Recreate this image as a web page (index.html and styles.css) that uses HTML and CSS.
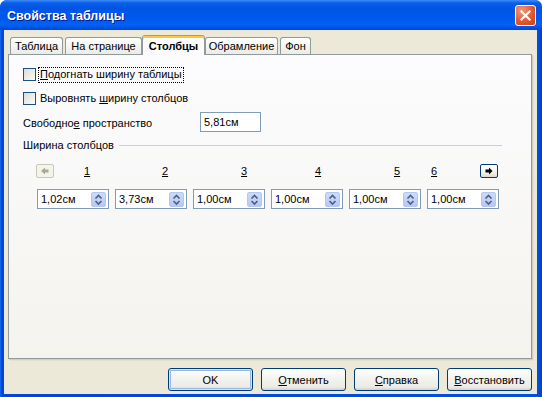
FILE: index.html
```html
<!DOCTYPE html>
<html lang="ru">
<head>
  <meta charset="UTF-8" />
  <title>Свойства таблицы</title>
  <link rel="stylesheet" href="styles.css">
</head>
<body>

  <div class="window">
    <div class="titlebar">
      <span class="title">Свойства таблицы</span>
      <button class="close-btn">
        <svg width="21" height="21" viewBox="0 0 21 21"><path d="M6 6 L15 15 M15 6 L6 15" stroke="#fff" stroke-width="2.4" stroke-linecap="square"/></svg>
      </button>
    </div>

    <div class="client">
      <div class="tabs">
        <div class="tab">Таблица</div>
        <div class="tab">На странице</div>
        <div class="tab active">Столбцы</div>
        <div class="tab">Обрамление</div>
        <div class="tab">Фон</div>
      </div>

      <div class="panel">
        <div class="check-row">
          <span class="checkbox"></span>
          <span class="check-label focused"><u>П</u>одогнать ширину таблицы</span>
        </div>
        <div class="check-row second">
          <span class="checkbox"></span>
          <span class="check-label">Выровнять <u>ш</u>ирину столбцов</span>
        </div>

        <div class="space-row">
          <span class="field-label">Свободно<u>е</u> пространство</span>
          <div class="textbox">5,81см</div>
        </div>

        <div class="group-title">
          <span>Ширина столбцов</span>
          <span class="rule"></span>
        </div>

        <div class="col-labels">
          <button class="arrow-btn disabled">
            <svg width="18" height="14" viewBox="0 0 18 14"><path d="M5 7 L9 3.5 L9 5.5 L12.5 5.5 L12.5 8.5 L9 8.5 L9 10.5 Z" fill="#aca899"/></svg>
          </button>
          <u>1</u>
          <u>2</u>
          <u>3</u>
          <u>4</u>
          <u>5</u>
          <u>6</u>
          <button class="arrow-btn">
            <svg width="18" height="14" viewBox="0 0 18 14"><path d="M12.5 7 L9 3.5 L9 5.5 L5.5 5.5 L5.5 8.5 L9 8.5 L9 10.5 Z" fill="#000"/></svg>
          </button>
        </div>

        <div class="spin-row">
          <div class="spinfield"><span>1,02см</span><span class="spin"></span></div>
          <div class="spinfield"><span>3,73см</span><span class="spin"></span></div>
          <div class="spinfield"><span>1,00см</span><span class="spin"></span></div>
          <div class="spinfield"><span>1,00см</span><span class="spin"></span></div>
          <div class="spinfield"><span>1,00см</span><span class="spin"></span></div>
          <div class="spinfield"><span>1,00см</span><span class="spin"></span></div>
        </div>
      </div>

      <div class="buttons">
        <button class="btn default">OK</button>
        <button class="btn"><u>О</u>тменить</button>
        <button class="btn"><u>С</u>правка</button>
        <button class="btn"><u>В</u>осстановить</button>
      </div>
    </div>
  </div>

</body>
</html>
```

FILE: styles.css
```css
* { box-sizing: border-box; }

body {
  margin: 0;
  background: #fff;
  font-family: "Liberation Sans", Arial, sans-serif;
  font-size: 11px;
  color: #000;
}

button {
  font-family: inherit;
  font-size: 11px;
  color: #000;
  padding: 0;
}

.window {
  width: 542px;
  height: 397px;
  display: flex;
  flex-direction: column;
  background: linear-gradient(90deg, #166aee, #0046d6 2px, #0050e0 538px, #0040c8);
  border-radius: 7px 7px 0 0;
  overflow: hidden;
}

.titlebar {
  height: 30px;
  display: flex;
  align-items: center;
  padding: 0 6px 0 7px;
  background: linear-gradient(#3c8cf8 0, #0a5ee8 3px, #0055e5 8px, #0058ee 18px, #0062f6 25px, #0050e0 28px, #0046d6 30px);
}

.title {
  color: #fff;
  font-weight: bold;
  font-size: 12.5px;
  text-shadow: 1px 1px 0 #0a1883;
  margin-top: 1px;
}

.close-btn {
  margin-left: auto;
  width: 21px;
  height: 21px;
  border: 1px solid #fff;
  border-radius: 3px;
  background: radial-gradient(circle at 30% 25%, #f09a7c, #e2582f 55%, #c8401a);
  display: flex;
  align-items: center;
  justify-content: center;
}

.close-btn svg {
  display: block;
}

.client {
  flex: 1;
  margin: 0 5px 3px 4px;
  background: #ece9d8;
  padding: 5px 5px 0 4px;
  display: flex;
  flex-direction: column;
}

.tabs {
  display: flex;
  align-items: flex-end;
  height: 19px;
  margin-left: 2px;
  position: relative;
  z-index: 1;
}

.tab {
  height: 17px;
  margin-right: 2px;
  border: 1px solid #919b9c;
  border-bottom: none;
  border-radius: 3px 3px 0 0;
  background: linear-gradient(#fff, #f3f3ef 60%, #ecebe6);
  line-height: 16px;
  text-align: center;
  white-space: nowrap;
}

.tab:nth-child(1) { width: 53px; }
.tab:nth-child(2) { width: 77px; }
.tab:nth-child(4) { width: 73px; }
.tab:nth-child(5) { width: 31px; }

.tab.active {
  width: 63px;
  height: 20px;
  margin: 0 0 -1px -2px;
  padding-top: 2px;
  font-weight: bold;
  background: #fcfcfe;
  border-top-color: #e68b2c;
  box-shadow: inset 0 2px 0 #ffc83c;
  line-height: 17px;
}

.panel {
  width: 524px;
  height: 305px;
  border: 1px solid #919b9c;
  background: linear-gradient(#fcfcfe, #f4f3ee);
  box-shadow: 1px 1px 0 #d0cebf, 2px 2px 0 #e3e0d0;
  padding: 11px 14px 0 14px;
}

.check-row {
  display: flex;
  align-items: center;
  height: 17px;
}

.check-row.second {
  margin-top: 7px;
}

.checkbox {
  width: 13px;
  height: 13px;
  border: 1px solid #1c5180;
  background: linear-gradient(135deg, #dcdcd7, #fbfbf9);
  margin-right: 2px;
}

.check-label {
  padding: 0 1px 1px;
  border: 1px solid transparent;
  line-height: 13px;
}

.check-label.focused {
  border: 1px dotted #000;
}

.space-row {
  display: flex;
  align-items: center;
  margin-top: 5px;
}

.field-label {
  width: 177px;
  margin-top: 1px;
}

.textbox {
  width: 61px;
  height: 20px;
  border: 1px solid #7f9db9;
  background: #fff;
  padding-left: 3px;
  line-height: 18px;
}

.group-title {
  display: flex;
  align-items: center;
  height: 14px;
  margin-top: 6px;
  margin-right: 15px;
}

.group-title .rule {
  flex: 1;
  border-top: 1px solid #d0d0bf;
  margin-left: 5px;
}

.col-labels {
  display: grid;
  grid-template-columns: 48px 78px 79px 74px 79px 37px 49px 18px;
  align-items: center;
  height: 14px;
  margin: 12px 0 0 13px;
}

.col-labels u {
  line-height: 12px;
}

.arrow-btn {
  width: 18px;
  height: 14px;
  border: 1px solid #003c74;
  border-radius: 2px;
  background: linear-gradient(#fff, #f0f0ea 70%, #dcd8cc);
  display: flex;
}

.arrow-btn.disabled {
  border-color: #c9c7ba;
  background: #f5f4ea;
}

.arrow-btn svg {
  display: block;
  margin: -1px;
}

.spin-row {
  display: flex;
  gap: 6px;
  margin: 11px 0 0 14px;
}

.spinfield {
  width: 72px;
  height: 20px;
  border: 1px solid #7f9db9;
  background: #fff;
  display: flex;
  align-items: center;
  padding: 0 2px 0 3px;
}

.spinfield span:first-child {
  flex: 1;
}

.spin {
  width: 15px;
  height: 15px;
  border: 1px solid #b5c6f0;
  border-radius: 2px;
  background:
    url("data:image/svg+xml,%3Csvg xmlns='http://www.w3.org/2000/svg' width='13' height='13'%3E%3Cpath d='M3.5 5.5 L6.5 2.5 L9.5 5.5 M3.5 8 L6.5 11 L9.5 8' fill='none' stroke='%234d6185' stroke-width='1.7'/%3E%3C/svg%3E") center no-repeat,
    linear-gradient(#cddaf9, #b7c8f5);
}

.buttons {
  display: flex;
  justify-content: flex-end;
  gap: 8px;
  margin-top: 9px;
}

.btn {
  width: 85px;
  height: 23px;
  border: 1px solid #003c74;
  border-radius: 3px;
  background: linear-gradient(#fff, #f4f4f0 40%, #ecebe6 85%, #d6d0c5);
}

.btn.default {
  box-shadow: inset 0 0 0 1px #cee7ff, inset 0 0 0 2px #98b8ea;
}
```
